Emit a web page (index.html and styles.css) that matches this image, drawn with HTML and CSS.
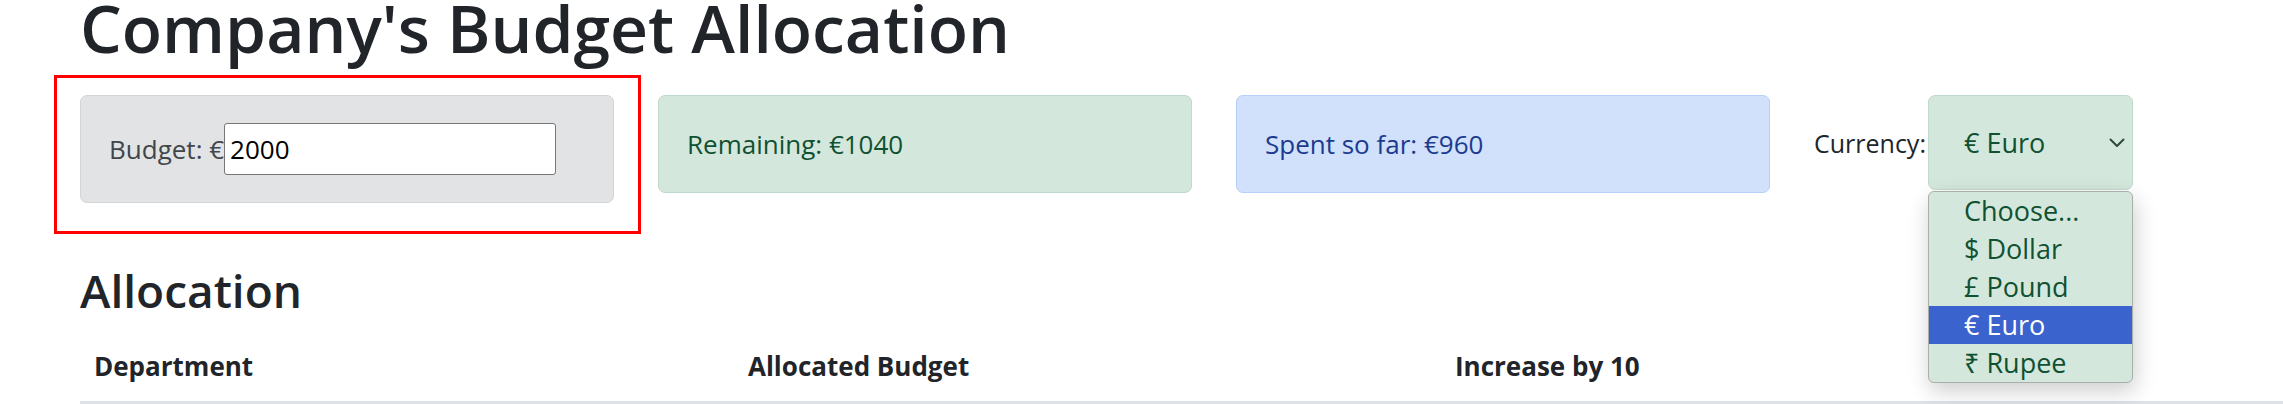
FILE: index.html
```html
<!DOCTYPE html>
<html lang="en">
<head>
<meta charset="utf-8">
<title>Company's Budget Allocation</title>
<link rel="stylesheet" href="styles.css">
</head>
<body>
<div class="page">
  <h1 class="title">Company's Budget Allocation</h1>
  <div class="summary">
    <div class="col budget-col">
      <div class="alert alert-secondary budget">
        <span>Budget: €</span><input class="budget-input" type="text" value="2000">
      </div>
      <div class="annotation"></div>
    </div>
    <div class="col">
      <div class="alert alert-success">Remaining: €1040</div>
    </div>
    <div class="col">
      <div class="alert alert-primary">Spent so far: €960</div>
    </div>
    <div class="col currency-col">
      <span class="currency-label">Currency:</span>
      <div class="select-wrap">
        <div class="select">
          <span>€ Euro</span>
          <svg class="chevron" width="16" height="10" viewBox="0 0 16 10"><path d="M1.5 1.5 8 8l6.5-6.5" fill="none" stroke="#2e4a3c" stroke-width="2" stroke-linecap="round" stroke-linejoin="round"/></svg>
        </div>
        <ul class="options">
          <li>Choose...</li>
          <li>$ Dollar</li>
          <li>£ Pound</li>
          <li class="selected">€ Euro</li>
          <li>₹ Rupee</li>
        </ul>
      </div>
    </div>
  </div>
  <h3 class="section">Allocation</h3>
  <table class="alloc">
    <colgroup><col class="c1"><col class="c2"><col class="c3"><col></colgroup>
    <thead>
      <tr><th>Department</th><th>Allocated Budget</th><th>Increase by 10</th><th class="hidden-col">Decrease by 10</th></tr>
    </thead>
  </table>
</div>
</body>
</html>
```
FILE: styles.css
```css
* { box-sizing: border-box; }
html, body { margin: 0; padding: 0; background: #fff; overflow: hidden; }
body {
  font-family: "Open Sans", "Noto Sans", sans-serif;
  font-size: 26px;
  line-height: 42px;
  color: #212529;
}
.page { padding-left: 80px; }
.title {
  font-size: 66px;
  font-weight: 600;
  line-height: 82px;
  margin: -14px 0 0;
  white-space: nowrap;
}
.summary {
  display: flex;
  gap: 44px;
  align-items: flex-start;
  margin-top: 27px;
}
.col { width: 534px; flex: none; }
.budget-col { position: relative; }
.alert {
  border: 1px solid transparent;
  border-radius: 7px;
  padding: 27px 28px;
  white-space: nowrap;
}
.alert-secondary { background: #e2e3e5; border-color: #d3d6d8; color: #41464b; }
.alert-success { background: #d4e7dc; border-color: #bfdacb; color: #0f5132; }
.alert-primary { background: #d1e0fb; border-color: #b8cffa; color: #1b3b8f; }
.budget { display: flex; align-items: center; }
.budget-input {
  width: 332px;
  height: 52px;
  border: 1px solid #767676;
  border-radius: 3px;
  padding: 0 5px;
  font-family: inherit;
  font-size: 26px;
  color: #000;
  background: #fff;
  margin: 0;
}
.annotation {
  position: absolute;
  left: -26px;
  top: -20px;
  width: 587px;
  height: 159px;
  border: 3px solid #ff0000;
  pointer-events: none;
}
.currency-col { display: flex; align-items: center; height: 95px; }
.currency-label { white-space: nowrap; font-size: 25px; width: 114px; flex: none; }
.select-wrap { position: relative; flex: none; }
.select {
  width: 205px;
  height: 95px;
  display: flex;
  align-items: center;
  padding: 0 7px 0 35px;
  background: #d4e7dc;
  border: 1px solid #bfdacb;
  border-radius: 7px;
  color: #0f5132;
  font-size: 27px;
}
.chevron { margin-left: auto; }
.options {
  position: absolute;
  top: 96px;
  left: 0;
  width: 205px;
  margin: 0;
  padding: 0;
  list-style: none;
  background: #d4e7dc;
  border: 1px solid #a9adab;
  border-radius: 6px;
  box-shadow: 2px 8px 22px rgba(0, 0, 0, 0.2);
  overflow: hidden;
  z-index: 5;
}
.options li {
  height: 38px;
  line-height: 38px;
  padding-left: 35px;
  color: #0f5132;
  font-size: 27px;
  white-space: nowrap;
}
.options li.selected { background: #3b63cd; color: #fff; }
.section {
  font-size: 46px;
  font-weight: 600;
  line-height: 58px;
  margin: 58px 0 12px;
}
.alloc {
  width: 2203px;
  border-collapse: collapse;
  table-layout: fixed;
}
.alloc .c1 { width: 654px; }
.alloc .c2 { width: 707px; }
.alloc .c3 { width: 484px; }
.alloc th {
  text-align: left;
  font-size: 26px;
  font-weight: 700;
  line-height: 42px;
  padding: 14px;
  border-bottom: 3px solid #dee2e6;
  white-space: nowrap;
}
.alloc th.hidden-col { padding-left: 12px; }
```
